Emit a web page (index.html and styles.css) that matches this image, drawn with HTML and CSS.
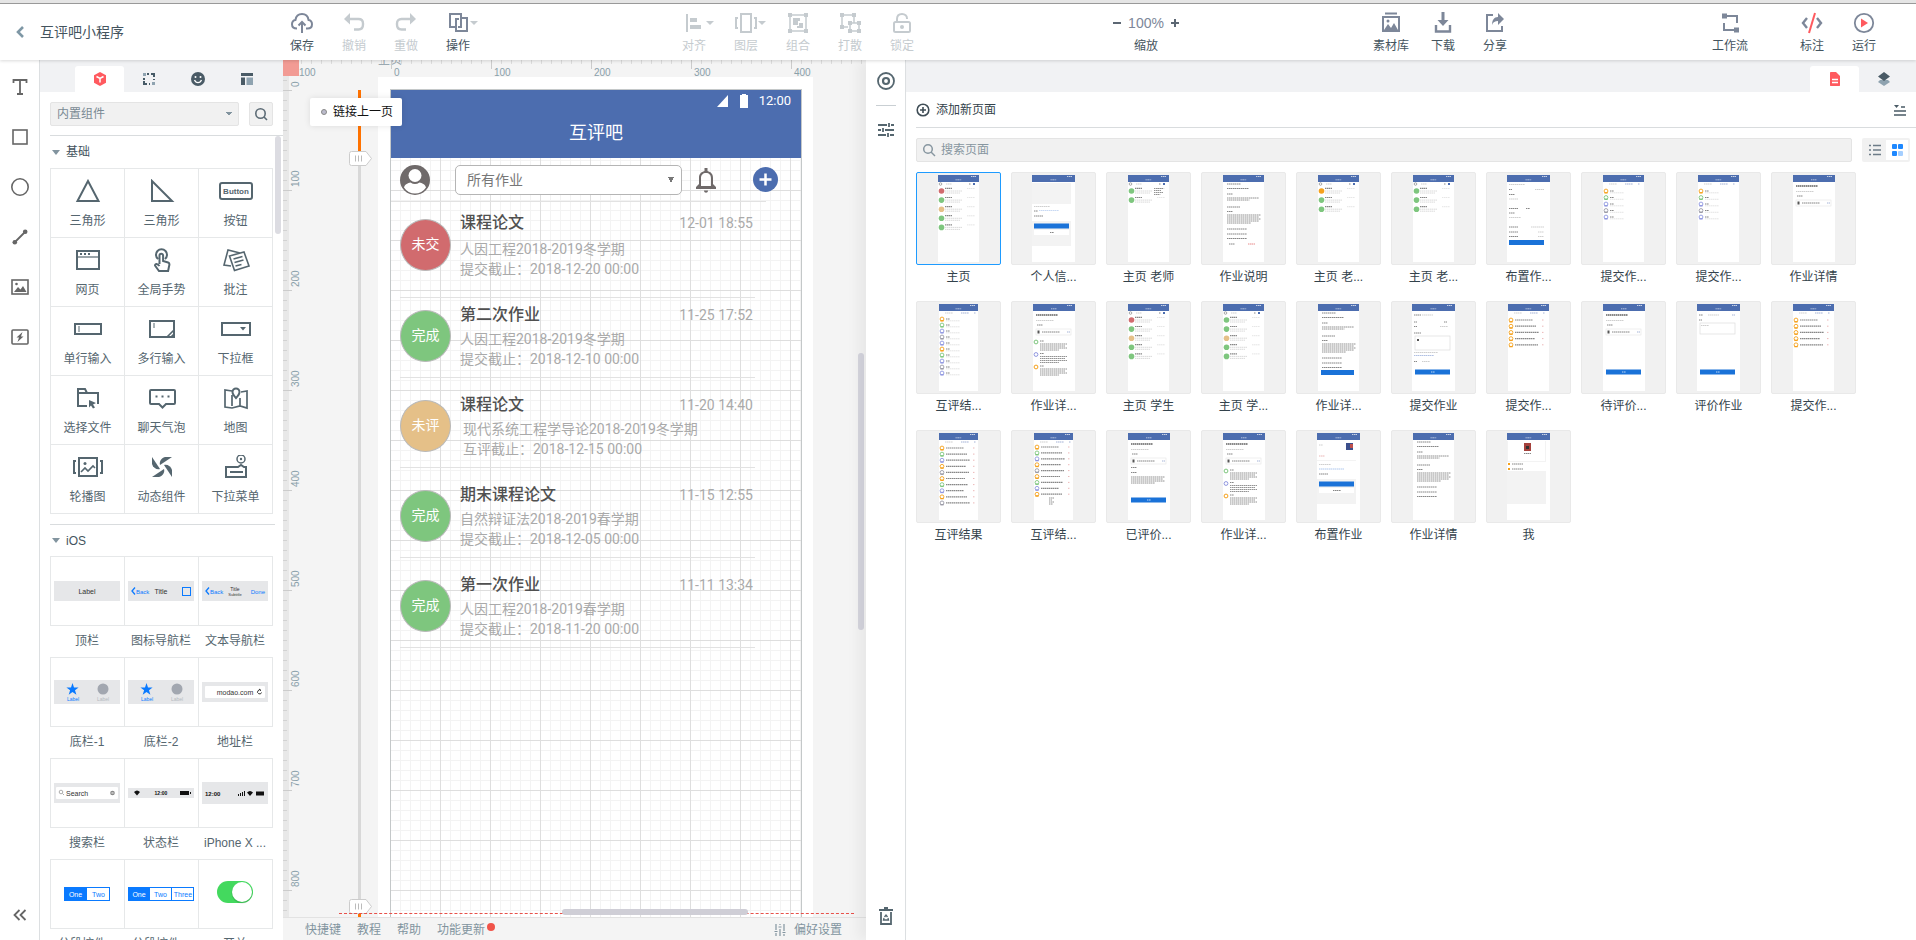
FILE: index.html
```html
<!DOCTYPE html>
<html lang="zh-CN">
<head>
<meta charset="utf-8">
<title>互评吧小程序</title>
<link rel="stylesheet" href="styles.css">
</head>
<body>

<header class="topbar">
 <button class="back" aria-label="返回"><svg width="10" height="14" viewBox="0 0 10 14"><path d="M8 2 3 7l5 5" fill="none" stroke="#7e97a5" stroke-width="2.6"/></svg></button>
 <h1 class="project-name">互评吧小程序</h1>

 <div class="tool-group group-edit">
  <button class="tool"><svg width="24" height="24" viewBox="0 0 24 24" fill="none" stroke="#7d8799" stroke-width="2"><path d="M7 17.500C4 17.500 2 16 2 13.200c0-2.600 1.700-4 3.500-4.300C6 5.300 8.500 3 12 3s6 2.300 6.500 5.900c1.900.3 3.500 1.700 3.500 4.300 0 2.800-2 4.300-4.500 4.300h-1.500"/><path d="M12 22V11M8.500 14.500 12 11l3.500 3.500"/></svg><span>保存</span></button>
  <button class="tool" disabled><svg width="24" height="24" viewBox="0 0 24 24" fill="none" stroke="#c5cbcf" stroke-width="2.400"><path d="M4 8h12.500c3 0 4.500 2 4.500 4.500v1c0 3-1.500 5-4.500 5H12"/><path d="M8 2v11.500L2 8z" fill="#c5cbcf" stroke="none"/></svg><span>撤销</span></button>
  <button class="tool" disabled><svg width="24" height="24" viewBox="0 0 24 24" fill="none" stroke="#c5cbcf" stroke-width="2.400"><path d="M20 8H7.500C4.500 8 3 10 3 12.500v1c0 3 1.500 5 4.500 5H12"/><path d="M16 2v11.500L22 8z" fill="#c5cbcf" stroke="none"/></svg><span>重做</span></button>
  <button class="tool has-caret"><svg width="24" height="24" viewBox="0 0 24 24" fill="none" stroke="#7d8799" stroke-width="2"><path d="M9 16H4V3h11v4M13 8h-3v12h11V7h-6v9h-3"/></svg><span>操作</span></button>
 </div>

 <div class="tool-group group-arrange">
  <button class="tool has-caret" disabled><svg width="24" height="24" viewBox="0 0 24 24" fill="#c5cbcf"><path d="M4 3h2v18H4zM8 7h7v4H8zM8 14h11v4H8z"/></svg><span>对齐</span></button>
  <button class="tool has-caret" disabled><svg width="24" height="24" viewBox="0 0 24 24" fill="none" stroke="#c5cbcf" stroke-width="2"><path d="M7 3h10v18H7zM4 7H2v10h2M20 7h2v10h-2"/></svg><span>图层</span></button>
  <button class="tool" disabled><svg width="24" height="24" viewBox="0 0 24 24" fill="#c5cbcf"><path d="M4 4h16v16H4z" fill="none" stroke="#c5cbcf" stroke-width="1.500"/><path d="M2 2h4v4H2zM18 2h4v4h-4zM2 18h4v4H2zM18 18h4v4h-4zM7 7h7v3h-2v4H7zM13 12h4v5h-6v-2h2z"/></svg><span>组合</span></button>
  <button class="tool" disabled><svg width="24" height="24" viewBox="0 0 24 24" fill="#c5cbcf"><path d="M4 4h12v8M4 4v12h6M12 12h9v8h-9z" fill="none" stroke="#c5cbcf" stroke-width="1.500"/><path d="M2 2h4v4H2zM14 2h4v4h-4zM2 14h4v4H2zM10 10h4v4h-4zM19 10h4v4h-4zM10 18h4v4h-4zM19 18h4v4h-4z"/></svg><span>打散</span></button>
  <button class="tool" disabled><svg width="24" height="24" viewBox="0 0 24 24" fill="none" stroke="#c5cbcf" stroke-width="2"><rect x="4" y="11" width="16" height="10" rx="1.500"/><path d="M7 11V8c0-3 2-5 5-5s5 2 5 4.500V8"/><circle cx="12" cy="16" r="2" fill="#c5cbcf" stroke="none"/></svg><span>锁定</span></button>
 </div>

 <div class="zoom">
  <div class="zoom-row"><button aria-label="缩小"><svg width="10" height="10"><path d="M1 5h8" stroke="#5c6773" stroke-width="2"/></svg></button><output>100%</output><button aria-label="放大"><svg width="10" height="10"><path d="M1 5h8M5 1v8" stroke="#5c6773" stroke-width="2"/></svg></button></div>
  <span>缩放</span>
 </div>

 <div class="tool-group group-file">
  <button class="tool"><svg width="24" height="24" viewBox="0 0 24 24" fill="none" stroke="#7d8799" stroke-width="2"><path d="M6 2.500h12M4 6h16v14H4z"/><path d="M5 19l4-6 3 4 3-5 4 7z" fill="#7d8799" stroke="none"/><circle cx="9" cy="10" r="1.500" fill="#7d8799" stroke="none"/></svg><span>素材库</span></button>
  <button class="tool"><svg width="24" height="24" viewBox="0 0 24 24" fill="none" stroke="#7d8799" stroke-width="2.400"><path d="M5 14v6.500h14V14"/><path d="M10.500 1h3v8h4L12 15 6.500 9h4z" fill="#7d8799" stroke="none"/></svg><span>下载</span></button>
  <button class="tool"><svg width="24" height="24" viewBox="0 0 24 24" fill="none" stroke="#7d8799" stroke-width="2"><path d="M10 4H4v16h15v-5"/><path d="M15 2l6 6-6 6v-4c-3 0-5 1-6 4 0-5 2-8 6-8z" fill="#7d8799" stroke="none"/></svg><span>分享</span></button>
 </div>

 <div class="tool-group group-run">
  <button class="tool flow"><svg width="24" height="24" viewBox="0 0 24 24" fill="none" stroke="#7d8799" stroke-width="2"><path d="M7 5h12v7M6 12v7h12"/><path d="M4 2.500h5v5H4zM16 16.500h5v5h-5z" fill="#7d8799" stroke="none"/></svg><span>工作流</span></button>
  <button class="tool"><svg width="24" height="24" viewBox="0 0 24 24" fill="none" stroke="#7d8799" stroke-width="2.400"><path d="M7 7l-4 5 4 5M17 7l4 5-4 5"/><path d="M15 2 9 22" stroke="#ff5a5f" stroke-width="2"/></svg><span>标注</span></button>
  <button class="tool"><svg width="24" height="24" viewBox="0 0 24 24" fill="none" stroke="#7d8799" stroke-width="1.800"><circle cx="12" cy="12" r="9.200"/><path d="M9 7.500l7 4.500-7 4.500z" fill="#ff5a5f" stroke="none"/></svg><span>运行</span></button>
 </div>
</header>

<main class="workspace">

 <nav class="shapes" aria-label="绘图工具">
  <button aria-label="文字"><svg width="20" height="20" viewBox="0 0 20 20" fill="none" stroke="#666" stroke-width="1.800"><path d="M3.500 6V3h13v3M10 3v14M7 17h6"/></svg></button>
  <button aria-label="矩形"><svg width="20" height="20" viewBox="0 0 20 20" fill="none" stroke="#666" stroke-width="1.600"><rect x="3" y="3" width="14" height="14"/></svg></button>
  <button aria-label="圆形"><svg width="20" height="20" viewBox="0 0 20 20" fill="none" stroke="#666" stroke-width="1.600"><circle cx="10" cy="10" r="8.200"/></svg></button>
  <button aria-label="线条"><svg width="20" height="20" viewBox="0 0 20 20" fill="#666"><path d="M5 15 15 5" stroke="#666" stroke-width="1.800"/><circle cx="4.800" cy="15.200" r="2.300"/><circle cx="15.200" cy="4.800" r="2.300"/></svg></button>
  <button aria-label="图片"><svg width="20" height="20" viewBox="0 0 20 20" fill="#666"><rect x="2" y="3" width="16" height="14" fill="none" stroke="#666" stroke-width="1.600"/><path d="M4 15l4-5 2.500 2.500L13 9l3.500 6z"/><circle cx="6.500" cy="7" r="1.300"/></svg></button>
  <button aria-label="链接区域"><svg width="20" height="20" viewBox="0 0 20 20" fill="#666"><rect x="2" y="3" width="16" height="14" rx="1" fill="none" stroke="#666" stroke-width="1.600"/><path d="M12.500 5 6.500 10.500h2.500L7.500 15 13.500 9.500H11z"/></svg></button>
  <button class="collapse" aria-label="收起"><svg width="14" height="12" viewBox="0 0 14 12" fill="none" stroke="#666" stroke-width="1.800"><path d="M6.500 1 1.500 6l5 5M12.500 1l-5 5 5 5"/></svg></button>
 </nav>

 <aside class="library">
  <div class="tabs">
   <button class="tab active" aria-label="组件"><svg width="16" height="16" viewBox="0 0 16 16"><path d="M8 1l6 3.200v7.600L8 15l-6-3.200V4.200z" fill="#ff5a5f"/><path d="M4.500 5.500 8 7.500l3.500-2M8 7.500v4" stroke="#fff" stroke-width="1.500" fill="none"/></svg></button>
   <button class="tab" aria-label="我的组件"><svg width="16" height="16" viewBox="0 0 16 16" fill="none" stroke="#465a66" stroke-width="2"><path d="M6 3h2M10 3h3v3M3 7v2M3 10v3h3M8 13h1M13 8v1"/><path d="M2 2h3v3H2zM11 11h3v3h-3z" fill="#8fa3b0" stroke="none"/></svg></button>
   <button class="tab" aria-label="图标"><svg width="16" height="16" viewBox="0 0 16 16"><circle cx="8" cy="8" r="7" fill="#4a5b66"/><circle cx="5.500" cy="6" r="1" fill="#fff"/><circle cx="10.500" cy="6" r="1" fill="#fff"/><path d="M4.500 9c1.500 3.500 5.500 3.500 7 0" stroke="#fff" fill="none" stroke-width="1.300"/></svg></button>
   <button class="tab" aria-label="模板"><svg width="16" height="16" viewBox="0 0 16 16"><path d="M2 2h12v3H2zM2 6.500h4V14H2z" fill="#4a5b66"/><path d="M7.500 6.500H14V14H7.500z" fill="#8fa3b0"/></svg></button>
  </div>
  <div class="library-filter">
   <select aria-label="组件库"><option>内置组件</option></select>
   <button aria-label="搜索组件"><svg width="14" height="14" viewBox="0 0 14 14" fill="none" stroke="#5c6b75" stroke-width="1.600"><circle cx="6.500" cy="6.500" r="4.700"/><path d="M10 10l3 3"/></svg></button>
  </div>

  <div class="library-list">
   <h2 class="section-title">基础</h2>
   <div class="basic-grid">
    <button><svg width="32" height="24" viewBox="0 0 32 24"><path d="M16 2 5.500 22h21z"/></svg>三角形</button>
    <button><svg width="32" height="24" viewBox="0 0 32 24"><path d="M6 2v20h20z"/></svg>三角形</button>
    <button><svg width="36" height="24" viewBox="0 0 36 24"><rect x="2" y="4" width="32" height="16" rx="2"/><text class="icon-text" x="18" y="15">Button</text></svg>按钮</button>
    <button><svg width="32" height="24" viewBox="0 0 32 24"><path d="M5 3h22v18H5z"/><path d="M5 9h22" stroke-width="1.200"/><path d="M8 6h2M12 6h2M16 6h2"/></svg>网页</button>
    <button><svg width="32" height="24" viewBox="0 0 32 24"><path d="M12 11a5.500 5.500 0 1 1 7 0M13.500 16V7.500a1.800 1.800 0 0 1 3.600 0V13l5 1.500c1.500.5 1.500 2 1 3.500l-1 5H13l-4-5.500c0-2 2.500-2 4.500.5"/></svg>全局手势</button>
    <button><svg width="32" height="24" viewBox="0 0 32 24"><path d="M11 18l-7-1L8 2l12 3M9.500 8 24 4l5 14-14.500 4.500zM13.500 11l9-2.500M14.500 14.500l9-2.500M15.500 18l6-1.500" stroke-width="1.600"/></svg>批注</button>
    <button><svg width="32" height="24" viewBox="0 0 32 24"><path d="M3 7h26v10H3z"/><path d="M7 9v6" stroke-width="1"/></svg>单行输入</button>
    <button><svg width="32" height="24" viewBox="0 0 32 24"><path d="M4 4h24v16H4z"/><path d="M8 6v5" stroke-width="1"/><path d="M21 20l7-7M25 20l3-3" stroke-width="1.600"/></svg>多行输入</button>
    <button><svg width="32" height="24" viewBox="0 0 32 24"><path d="M2 6h28v12H2z"/><path d="M20 10h6l-3 3.500z" fill="#55666f" stroke="none"/></svg>下拉框</button>
    <button><svg width="32" height="24" viewBox="0 0 32 24"><path d="M15 20H6V3h7l2 4h11v11M6 7h9"/><path d="M17 14l7 3-3 1.500 2 3-2 1-2-3-2 2z" fill="#55666f" stroke="none"/></svg>选择文件</button>
    <button><svg width="32" height="24" viewBox="0 0 32 24"><path d="M5 4h23c1 0 1 0 1 1v12c0 1 0 1-1 1h-8l-3.500 3.500L13 18H5c-1 0-1 0-1-1V5c0-1 0-1 1-1z"/><path d="M9.500 10.500h2M15.500 10.500h2M21.500 10.500h2"/></svg>聊天气泡</button>
    <button><svg width="32" height="24" viewBox="0 0 32 24"><path d="M12 5 5 4v17l7 1 8-2 7 2V5l-6 1M12 9v11M20 12v8" stroke-width="1.700"/><path d="M16 12c-3-3-3.500-4.500-3.500-6a3.500 3.500 0 0 1 7 0c0 1.500-.5 3-3.500 6z"/></svg>地图</button>
    <button><svg width="32" height="24" viewBox="0 0 32 24"><path d="M7 3h18v18H7zM4 6H2v12h2M28 6h2v12h-2"/><path d="M9 17l4-4 3 3 5-5 2 2" stroke-width="1.600"/><circle cx="13" cy="8.500" r="1.500" fill="#55666f" stroke="none"/></svg>轮播图</button>
    <button><svg width="32" height="24" viewBox="0 0 32 24"><g id="blades"><path class="solid" d="M26 2H19c-4 1-6 5-5 8z"/><path class="solid" d="M26 2H19c-4 1-6 5-5 8z" transform="rotate(90 16 12)"/><path class="solid" d="M26 2H19c-4 1-6 5-5 8z" transform="rotate(180 16 12)"/><path class="solid" d="M26 2H19c-4 1-6 5-5 8z" transform="rotate(270 16 12)"/></g></svg>动态组件</button>
    <button><svg width="32" height="24" viewBox="0 0 32 24"><path d="M6 12h12l3-2 3 2h2v10H6zM10 17h13"/><circle cx="21" cy="4" r="4" stroke-width="1.500"/><circle cx="21" cy="4" r="1.200" fill="#55666f" stroke="none"/></svg>下拉菜单</button>
   </div>

   <h2 class="section-title section-ios">iOS</h2>
   <div class="ios-grid">
    <button><span class="preview"><svg width="66" height="20"><rect width="66" height="20" fill="#e6e7e9"/><text x="33" y="13" text-anchor="middle">Label</text></svg></span>顶栏</button>
    <button><span class="preview"><svg width="66" height="20"><rect width="66" height="20" fill="#e6e7e9"/><path d="M7 6.500 4 10l3 3.500" fill="none" stroke="#0a7aff" stroke-width="1.300"/><text class="small blue" x="8" y="13">Back</text><text x="33" y="13" text-anchor="middle">Title</text><rect x="54.500" y="6.500" width="8" height="8" fill="none" stroke="#0a7aff"/></svg></span>图标导航栏</button>
    <button><span class="preview"><svg width="66" height="20"><rect width="66" height="20" fill="#e6e7e9"/><path d="M7 6.500 4 10l3 3.500" fill="none" stroke="#0a7aff" stroke-width="1.300"/><text class="small blue" x="8" y="13">Back</text><text class="tiny" x="33" y="10" text-anchor="middle">Title</text><text class="mini" x="33" y="15" text-anchor="middle">Subtitle</text><text class="small blue" x="63" y="13" text-anchor="end">Done</text></svg></span>文本导航栏</button>
    <button><span class="preview"><svg width="66" height="24"><rect width="66" height="24" fill="#e6e7e9"/><path d="M18.500 3l1.500 4.400h4.600L21 10.200l1.400 4.500-3.900-2.800-3.800 2.800 1.400-4.500-3.700-2.800H17z" fill="#0a7aff"/><circle cx="49" cy="9" r="5.500" fill="#a2a7b0"/><text class="tiny blue" x="19" y="21" text-anchor="middle">Label</text><text class="tiny pale" x="49" y="21" text-anchor="middle">Label</text></svg></span>底栏-1</button>
    <button><span class="preview"><svg width="66" height="24"><rect width="66" height="24" fill="#e6e7e9"/><path d="M18.500 3l1.500 4.400h4.600L21 10.200l1.400 4.500-3.900-2.800-3.800 2.800 1.400-4.500-3.700-2.800H17z" fill="#0a7aff"/><circle cx="49" cy="9" r="5.500" fill="#a2a7b0"/><text class="tiny blue" x="19" y="21" text-anchor="middle">Label</text><text class="tiny pale" x="49" y="21" text-anchor="middle">Label</text></svg></span>底栏-2</button>
    <button><span class="preview"><svg width="66" height="20"><rect width="66" height="20" fill="#e6e7e9"/><rect x="3" y="4" width="60" height="12" rx="1" fill="#fff"/><text x="33" y="13" text-anchor="middle">modao.com</text><path d="M59 8.500a2 2 0 1 0 .5 2M57 7l2 1.500" fill="none" stroke="#333"/></svg></span>地址栏</button>
    <button><span class="preview"><svg width="66" height="20"><rect width="66" height="20" fill="#e6e7e9"/><rect x="2" y="4" width="62" height="12" rx="1" fill="#fff"/><circle cx="7" cy="9" r="1.800" fill="none" stroke="#999" stroke-width=".8"/><path d="M8.500 10.500 10 12" stroke="#999" stroke-width=".8"/><text x="12" y="12.500">Search</text><circle cx="58.500" cy="10" r="2.300" fill="#888"/><path d="M57.600 9.100l1.800 1.800M59.400 9.100l-1.800 1.800" stroke="#fff" stroke-width=".6"/></svg></span>搜索栏</button>
    <button><span class="preview"><svg width="66" height="10"><rect width="66" height="10" fill="#e6e7e9"/><path d="M6 4c2-2 4-2 6 0L9 7.500z" fill="#111"/><text class="tiny bold" x="33" y="7" text-anchor="middle">12:00</text><path d="M52 3h9v4h-9z" fill="#111"/><path d="M62 4h1v2h-1z" fill="#111"/></svg></span>状态栏</button>
    <button><span class="preview"><svg width="66" height="22"><rect width="66" height="22" fill="#e6e7e9"/><text class="bold small" x="3" y="14">12:00</text><path d="M36 12h1v2h-1zM38 11h1v3h-1zM40 10h1v4h-1zM42 9h1v5h-1zM45 10.500c2-2 4-2 6 0L48 14zM54 9.500h8v4h-8z" fill="#111"/></svg></span>iPhone X ...</button>
    <button><span class="preview"><svg width="46" height="14"><rect x=".5" y=".5" width="45" height="13" fill="#fff" stroke="#0a7aff"/><rect width="23" height="14" fill="#0a7aff"/><text class="white" x="11.500" y="9.500" text-anchor="middle">One</text><text class="blue" x="34.500" y="9.500" text-anchor="middle">Two</text></svg></span>分段控件...</button>
    <button><span class="preview"><svg width="66" height="14"><rect x=".5" y=".5" width="65" height="13" fill="#fff" stroke="#0a7aff"/><rect width="22" height="14" fill="#0a7aff"/><path d="M43.500 0v14" stroke="#0a7aff"/><text class="white" x="11" y="9.500" text-anchor="middle">One</text><text class="blue" x="32.500" y="9.500" text-anchor="middle">Two</text><text class="blue" x="55" y="9.500" text-anchor="middle">Three</text></svg></span>分段控件...</button>
    <button><span class="preview"><svg width="40" height="28"><rect x="2" y="1" width="36" height="22" rx="11" fill="#43d95e"/><circle cx="27" cy="13" r="10.500" fill="#000" opacity=".12"/><circle cx="27" cy="12" r="10" fill="#fff"/></svg></span>开关</button>
   </div>
  </div>
 </aside>

 <section class="editor">
  <div class="stage">
   <div class="artboard">
    <div class="phone">
     <div class="phone-status">
      <svg width="12" height="12"><path d="M11 0v12H0z" fill="#fff"/></svg>
      <svg width="10" height="14"><path d="M3 0h4v1h2v13H1V1h2z" fill="#fff"/></svg>
      <span>12:00</span>
     </div>
     <div class="phone-title">互评吧</div>
     <div class="phone-filter">
      <svg width="30" height="30" viewBox="0 0 30 30"><circle cx="15" cy="15" r="15" fill="#6f6a6a"/><circle cx="15" cy="10.500" r="6.500" fill="#fff"/><path d="M4 22.500C5 19 8 18 10.500 17.500c3 2 6 2 9 0C22 18 25 19 26 22.500a13 13 0 0 1-22 0z" fill="#fff"/></svg>
      <select aria-label="作业筛选"><option>所有作业</option></select>
      <svg width="22" height="26" viewBox="0 0 22 26" fill="#6f6a6a"><path d="M1 22v-2l3-3v-6c0-4 2-6 5.500-7V1h3v3C16 5 18 7 18 11v6l3 3v2zM6 19h10v-8c0-3-2-5-5-5s-5 2-5 5zM9 23.500h4c0 3-4 3-4 0z"/></svg>
      <svg width="25" height="25" viewBox="0 0 25 25"><circle cx="12.500" cy="12.500" r="12.500" fill="#4c6daf"/><path d="M12.500 6.500v12M6.500 12.500h12" stroke="#fff" stroke-width="2.500"/></svg>
     </div>
     <ul class="homework">
      <li class="first"><span class="badge red">未交</span><div class="info"><h3>课程论文<time>12-01 18:55</time></h3><p>人因工程2018-2019冬学期</p><p>提交截止：2018-12-20 00:00</p></div></li>
      <li class="second"><span class="badge green">完成</span><div class="info"><h3>第二次作业<time>11-25 17:52</time></h3><p>人因工程2018-2019冬学期</p><p>提交截止：2018-12-10 00:00</p></div></li>
      <li class="review"><span class="badge amber">未评</span><div class="info"><h3>课程论文<time>11-20 14:40</time></h3><p>现代系统工程学导论2018-2019冬学期</p><p>互评截止：2018-12-15 00:00</p></div></li>
      <li><span class="badge green">完成</span><div class="info"><h3>期末课程论文<time>11-15 12:55</time></h3><p>自然辩证法2018-2019春学期</p><p>提交截止：2018-12-05 00:00</p></div></li>
      <li><span class="badge green">完成</span><div class="info"><h3>第一次作业<time>11-11 13:34</time></h3><p>人因工程2018-2019春学期</p><p>提交截止：2018-11-20 00:00</p></div></li>
     </ul>
    </div>
   </div>

   <!-- rulers, page length slider and scrollbars float over the canvas -->
   <div class="page-caption">主页</div>
   <div class="ruler-x"><span>100</span><span>0</span><span>100</span><span>200</span><span>300</span><span>400</span></div>
   <div class="ruler-y"><span>0</span><span>100</span><span>200</span><span>300</span><span>400</span><span>500</span><span>600</span><span>700</span><span>800</span></div>
   <div class="ruler-corner"></div>
   <div class="length-track"></div>
   <svg class="handle handle-top" width="24" height="15" viewBox="0 0 24 15"><path d="M2.500.5H17l5.500 7-5.500 7H2.500a2 2 0 0 1-2-2v-10a2 2 0 0 1 2-2z" fill="#fff" stroke="#ccc"/><path d="M6.500 4.500v6M9.500 4.500v6M12.500 4.500v6" stroke="#bbb"/></svg>
   <svg class="handle handle-bottom" width="24" height="15" viewBox="0 0 24 15"><path d="M2.500.5H17l5.500 7-5.500 7H2.500a2 2 0 0 1-2-2v-10a2 2 0 0 1 2-2z" fill="#fff" stroke="#ccc"/><path d="M6.500 4.500v6M9.500 4.500v6M12.500 4.500v6" stroke="#bbb"/></svg>
   <div class="fold-line"></div>
   <div class="link-tip"><i></i>链接上一页</div>
   <div class="scroll-y"></div>
   <div class="scroll-x"></div>
  </div>
  <footer class="editor-footer">
   <a href="#">快捷键</a><a href="#">教程</a><a href="#">帮助</a><a href="#" class="has-news">功能更新</a>
   <a href="#" class="prefs"><svg width="12" height="14" viewBox="0 0 12 14" fill="none" stroke="#82949f" stroke-width="1.200"><path d="M2 1v6M2 10v3M6 1v1M6 6v7M10 1v7M10 11v2M.5 8.500h3M4.500 4h3M8.500 9.500h3"/></svg>偏好设置</a>
  </footer>
 </section>

 <nav class="side-strip" aria-label="属性">
  <button aria-label="页面状态"><svg width="20" height="20" viewBox="0 0 20 20" fill="none" stroke="#55666f"><circle cx="10" cy="10" r="8" stroke-width="1.800"/><circle cx="10" cy="10" r="3" stroke-width="2.200"/></svg></button>
  <button class="adjust" aria-label="外观"><svg width="20" height="20" viewBox="0 0 20 20" fill="none" stroke="#55666f" stroke-width="1.800"><path d="M2 5h9M15 5h3M2 10h3M9 10h9M2 15h8M14 15h4M13 3v4M7 8v4M12 13v4"/></svg></button>
  <button class="trash" aria-label="回收站"><svg width="20" height="20" viewBox="0 0 20 20" fill="none" stroke="#55666f" stroke-width="1.800"><path d="M3 4h14M8 2h4M5 6v12h10V6"/><path d="M8.500 11l1.500-2 1.500 2M8 12l-.5 2h5L12 12" stroke-width="1.300"/></svg></button>
 </nav>

 <aside class="pages">
  <div class="tabs tabs-right">
   <button class="tab active" aria-label="页面"><svg width="16" height="16" viewBox="0 0 16 16"><path d="M4 1h5l4 4v9c0 1-.5 1-1 1H4c-1 0-1-.5-1-1V2c0-1 .5-1 1-1z" fill="#ff5a5f"/><path d="M5 8.500h6M5 11.500h6" stroke="#fff" stroke-width="1.300"/></svg></button>
   <button class="tab" aria-label="图层"><svg width="16" height="16" viewBox="0 0 16 16"><path d="M8 15 2 11l2-2h8l2 2z" fill="#8fa3b0"/><path d="M8 1l6 4.500L8 10 2 5.500z" fill="#4a5b66"/></svg></button>
  </div>
  <div class="pages-head">
   <button class="add-page"><svg width="14" height="14" viewBox="0 0 14 14" fill="none" stroke="#3f4d56" stroke-width="1.600"><circle cx="7" cy="7" r="5.800"/><path d="M4 7h6M7 4v6"/></svg>添加新页面</button>
   <button aria-label="折叠全部"><svg width="14" height="14" viewBox="0 0 14 14"><path d="M1 2h5L3.500 5z" fill="#4a5b66"/><path d="M8 4h4M1 8h12M1 12h12" stroke="#4a5b66" stroke-width="1.500"/></svg></button>
  </div>
  <div class="pages-search">
   <label class="search-box"><svg width="14" height="14" viewBox="0 0 14 14" fill="none" stroke="#8796a0" stroke-width="1.500"><circle cx="6" cy="6" r="4.300"/><path d="M9 9l4 4"/></svg><input type="text" placeholder="搜索页面" aria-label="搜索页面"></label>
   <div class="view-switch">
    <button aria-label="列表"><svg width="12" height="12"><path d="M0 1.500h2M4 1.500h8M0 6h2M4 6h8M0 10.500h2M4 10.500h8" stroke="#6d7c88" stroke-width="1.500"/></svg></button>
    <button class="on" aria-label="缩略图"><svg width="12" height="12" fill="#1e88ff"><rect x="1" width="5" height="5" rx="1"/><rect x="7" width="5" height="5" rx="1"/><rect x="1" y="7" width="5" height="5" rx="1"/><rect x="7" y="7" width="5" height="5" rx="1" opacity=".4"/></svg></button>
   </div>
  </div>
  <div class="page-grid" id="pageGrid"></div>
 </aside>
</main>

<script src="pages.js"></script>
</body>
</html>
```
FILE: styles.css
```css
* { box-sizing: border-box; }
body {
 margin: 0;
 height: 100vh;
 display: flex;
 flex-direction: column;
 overflow: hidden;
 border-top: 3px solid #e5e5e5;
 font: 12px/16px "Liberation Sans", "Noto Sans CJK SC", sans-serif;
 color: #44545e;
 background: #fff;
}
button {
 font: inherit;
 color: inherit;
 border: 0;
 padding: 0;
 background: none;
}
h1, h2, h3, p, ul { margin: 0; padding: 0; font-weight: normal; }
svg { display: block; flex: none; }
a { color: inherit; text-decoration: none; }

/* top bar */
.topbar {
 position: relative;
 z-index: 5;
 height: 57px;
 flex: none;
 display: flex;
 align-items: center;
 border-top: 1px solid #999;
 background: #fff;
 box-shadow: 0 1px 3px rgba(0, 0, 0, .15);
}
.back { padding: 0 15px; }
.project-name {
 width: 236px;
 font-size: 14px;
 line-height: 20px;
}
.tool-group { display: flex; }
.tool {
 position: relative;
 width: 52px;
 display: flex;
 flex-direction: column;
 align-items: center;
 gap: 3px;
}
.tool:disabled { color: #c5cbcf; }
.has-caret::after {
 content: "";
 position: absolute;
 right: 6px;
 top: 10px;
 border: 4px solid transparent;
 border-top-color: #c5cbcf;
 border-bottom: 0;
}
.group-arrange { margin-left: 184px; }
.zoom {
 width: 96px;
 margin-left: 170px;
 display: flex;
 flex-direction: column;
 align-items: center;
 gap: 5px;
 padding-top: 2px;
}
.zoom-row { display: flex; align-items: center; gap: 6px; height: 20px; font-size: 14px; color: #7d8799; }
.group-file { margin-left: 171px; }
.group-run { margin-left: auto; padding-right: 26px; }
.flow { margin-right: 30px; }

.workspace { flex: 1; display: flex; min-height: 0; }

/* drawing tools */
.shapes {
 width: 40px;
 flex: none;
 display: flex;
 flex-direction: column;
 align-items: center;
 gap: 30px;
 padding: 17px 0 19px;
 border-right: 1px solid #dcdfe1;
}
.collapse { margin-top: auto; }

/* component library */
.library {
 width: 243px;
 flex: none;
 display: flex;
 flex-direction: column;
}
.tabs {
 height: 32px;
 flex: none;
 display: flex;
 align-items: flex-end;
 padding-left: 35px;
 background: #f1f2f4;
}
.tab {
 width: 49px;
 height: 26px;
 display: flex;
 align-items: center;
 justify-content: center;
}
.tab.active { background: #fff; border-radius: 3px 3px 0 0; }
.library-filter {
 display: flex;
 gap: 10px;
 margin-left: 10px;
 padding: 10px 0 9px;
 border-bottom: 1px solid #d9dcde;
}
.library-filter select {
 width: 189px;
 height: 24px;
 padding: 0 6px;
 appearance: none;
 font: inherit;
 color: #7a8a94;
 border: 1px solid #e4e4e4;
 border-radius: 2px;
 background:
  linear-gradient(to top right, transparent 50%, #82949f 50%) no-repeat right 9px center / 3px 4px,
  linear-gradient(to top left, transparent 50%, #82949f 50%) no-repeat right 6px center / 3px 4px,
  #f1f1f1;
}
.library-filter button {
 width: 24px;
 height: 24px;
 display: flex;
 align-items: center;
 justify-content: center;
 border: 1px solid #e4e4e4;
 border-radius: 2px;
 background: #f1f1f1;
}
.library-list {
 position: relative;
 flex: 1;
 min-height: 0;
 overflow: hidden;
 padding: 0 8px 0 10px;
}
.library-list::after {
 content: "";
 position: absolute;
 right: 2px;
 top: 0;
 width: 6px;
 height: 98px;
 border-radius: 3px;
 background: #dcdce2;
}
.section-title {
 display: flex;
 align-items: center;
 gap: 6px;
 height: 32px;
 padding-left: 2px;
 font-size: 12px;
}
.section-title::before {
 content: "";
 border: 4px solid transparent;
 border-top: 5px solid #82949f;
 border-bottom: 0;
}
.section-ios { margin-top: 10px; border-top: 1px solid #d9dcde; }
.basic-grid, .ios-grid {
 display: grid;
 grid-template-columns: repeat(3, 74px);
 width: 223px;
}
.basic-grid { border: solid #e6e8e9; border-width: 1px 0 0 1px; }
.basic-grid button {
 height: 69px;
 display: flex;
 flex-direction: column;
 align-items: center;
 gap: 10px;
 padding-top: 10px;
 border: solid #e6e8e9;
 border-width: 0 1px 1px 0;
 color: #55666f;
}
.basic-grid svg { fill: none; stroke: #55666f; stroke-width: 2; }
.basic-grid .solid { fill: #55666f; stroke: none; }
.basic-grid .icon-text { font: bold 8px "Liberation Sans", sans-serif; text-anchor: middle; fill: #55666f; stroke: none; }
.ios-grid button {
 height: 101px;
 display: flex;
 flex-direction: column;
 align-items: center;
 gap: 7px;
 color: #55666f;
}
.preview {
 width: 75px;
 height: 70px;
 flex: none;
 display: flex;
 align-items: center;
 justify-content: center;
 border: 1px solid #e6e8e9;
}
.preview text { font: 7px "Liberation Sans", sans-serif; fill: #333; }
.preview .small { font-size: 6px; }
.preview .tiny { font-size: 5px; }
.preview .mini { font-size: 4px; }
.preview .blue { fill: #0a7aff; }
.preview .pale { fill: #b5b9c0; }
.preview .white { fill: #fff; }
.preview .bold { font-weight: bold; fill: #111; }

/* canvas */
.editor {
 flex: 583 1 0;
 min-width: 0;
 display: flex;
 flex-direction: column;
 background: #f4f4f4;
}
.stage {
 position: relative;
 flex: 1;
 min-height: 0;
 overflow: hidden;
}
.artboard {
 height: 100%;
 width: 435px;
 margin-left: 95px;
 padding: 29px 11px 0 12px;
 background: linear-gradient(#f4f4f4 17px, #fff 17px);
}
.phone {
 height: 100%;
 border: solid #c4c8c9;
 border-width: 1px 1px 0;
 font-family: Roboto, "Noto Sans CJK SC", sans-serif;
 background:
  linear-gradient(90deg, #dedede 1px, transparent 1px) 49px 0 / 50px 50px,
  linear-gradient(#dedede 1px, transparent 1px) 0 0 / 50px 50px,
  linear-gradient(90deg, #f3f3f3 1px, transparent 1px) 9px 0 / 10px 10px,
  linear-gradient(#f3f3f3 1px, #fff 1px) 0 0 / 10px 10px;
}
.phone-status {
 height: 22px;
 display: flex;
 align-items: center;
 justify-content: flex-end;
 gap: 10px;
 padding-right: 10px;
 font-size: 13px;
 color: #fff;
 background: #4c6daf;
}
.phone-title {
 height: 46px;
 line-height: 42px;
 text-align: center;
 font-size: 18px;
 color: #fff;
 background: #4c6daf;
}
.phone-filter {
 display: flex;
 align-items: center;
 height: 44px;
 padding-left: 9px;
 border-bottom: 1px solid #e2e2e2;
 margin-right: 35px;
}
.phone-filter select {
 flex: 1;
 height: 30px;
 margin: 0 13px 0 25px;
 padding: 0 11px;
 appearance: none;
 font: 14px/20px Roboto, "Noto Sans CJK SC", sans-serif;
 color: #777;
 border: 1px solid #b5b5b5;
 border-radius: 5px;
 background:
  linear-gradient(to top right, transparent 50%, #777 50%) no-repeat right 10px center / 3px 6px,
  linear-gradient(to top left, transparent 50%, #777 50%) no-repeat right 7px center / 3px 6px,
  #fff;
}
.phone-filter svg:last-child { margin-left: 36px; margin-right: -12px; }
.homework {
 list-style: none;
 width: 355px;
 margin-left: 9px;
}
.homework li {
 display: flex;
 align-items: center;
 gap: 9px;
 padding: 15px 0 8px;
 border-bottom: 1px solid #e2e2e2;
}
.homework .first { padding: 9px 0 18px; }
.homework .second { padding: 5px 0 8px; }
.badge {
 width: 51px;
 height: 52px;
 flex: none;
 line-height: 49px;
 text-align: center;
 font-size: 14px;
 color: #fff;
 border: 1px solid #b9b9b9;
 border-radius: 50%;
}
.red { background: #d16b6e; }
.green { background: #7ec67e; }
.amber { background: #e5c088; }
.info { flex: 1; }
.info h3 {
 display: flex;
 justify-content: space-between;
 align-items: center;
 padding-right: 2px;
 margin-bottom: 2px;
 font-size: 16px;
 font-weight: 500;
 line-height: 24px;
 color: #505050;
}
.first h3 { margin-bottom: 4px; }
.info time { font-size: 14px; font-weight: normal; color: #aaa; }
.info p { font-size: 14px; line-height: 20px; color: #aaa; white-space: nowrap; }
.review p { padding-left: 3px; }

.page-caption {
 position: absolute;
 left: 95px;
 top: -8px;
 color: #9aa8b0;
}
.ruler-x {
 position: absolute;
 top: 0;
 left: 8px;
 right: 0;
 height: 20px;
 display: flex;
 padding-top: 5px;
 font-size: 10px;
 color: #8aa0aa;
 background:
  linear-gradient(90deg, #ccc 1px, transparent 1px) repeat-x 0 0 / 100px 9px,
  linear-gradient(90deg, #ddd 1px, transparent 1px) repeat-x 0 0 / 10px 4px;
}
.ruler-x span { width: 100px; flex: none; padding-left: 3px; }
.ruler-x span:first-child { padding-left: 8px; }
.ruler-y {
 position: absolute;
 top: 0;
 left: 0;
 bottom: 0;
 width: 20px;
 display: flex;
 flex-direction: column;
 overflow: hidden;
 font-size: 10px;
 color: #8aa0aa;
 background:
  linear-gradient(#ccc 1px, transparent 1px) repeat-y 0 30px / 9px 100px,
  linear-gradient(#d2d2d2 1px, transparent 1px) repeat-y 0 0 / 4px 10px,
  linear-gradient(90deg, #e8e8e8 6px, transparent 6px);
}
.ruler-y span {
 height: 100px;
 flex: none;
 padding: 3px 6px 0 0;
 writing-mode: vertical-rl;
 transform: rotate(180deg);
 line-height: 14px;
}
.ruler-y span:first-child { height: 30px; }
.ruler-corner {
 position: absolute;
 left: 0;
 top: 0;
 width: 16px;
 height: 16px;
 background: #f29b94;
}
.length-track {
 position: absolute;
 left: 75px;
 top: 30px;
 bottom: 0;
 width: 3px;
 background: linear-gradient(#ff7200 62px, #d8d8d8 62px, #d8d8d8 calc(100% - 4px), #ff7200 calc(100% - 4px));
}
.handle { position: absolute; left: 66px; }
.handle-top { top: 91px; }
.handle-bottom { bottom: 3px; }
.fold-line {
 position: absolute;
 left: 56px;
 right: 12px;
 bottom: 3px;
 border-top: 1px dashed #e8504a;
}
.link-tip {
 position: absolute;
 left: 27px;
 top: 38px;
 display: flex;
 align-items: center;
 gap: 6px;
 height: 28px;
 padding: 0 9px 0 11px;
 color: #111;
 background: #fff;
 border-radius: 2px;
 box-shadow: 0 0 6px rgba(0, 0, 0, .1);
}
.link-tip i { width: 6px; height: 6px; border: 1px solid #888; border-radius: 50%; background: #bbc; }
.scroll-y {
 position: absolute;
 right: 2px;
 top: 293px;
 width: 6px;
 height: 277px;
 border-radius: 3px;
 background: #d5d5de;
}
.scroll-x {
 position: absolute;
 left: 279px;
 bottom: 2px;
 width: 186px;
 height: 6px;
 border-radius: 3px;
 background: #cfced6;
}
.editor-footer {
 height: 23px;
 flex: none;
 display: flex;
 align-items: center;
 gap: 16px;
 padding: 2px 24px 0 22px;
 border-top: 1px solid #e2e2e2;
 color: #82949f;
}
.has-news { position: relative; }
.has-news::after {
 content: "";
 position: absolute;
 right: -10px;
 top: 1px;
 width: 8px;
 height: 8px;
 border-radius: 50%;
 background: #f0544a;
}
.prefs { margin-left: auto; display: flex; align-items: center; gap: 8px; }

/* strip between canvas and pages */
.side-strip {
 width: 40px;
 flex: none;
 display: flex;
 flex-direction: column;
 align-items: center;
 padding: 11px 0 14px;
 border-right: 1px solid #dcdfe1;
 box-shadow: -8px 0 12px rgba(0, 0, 0, .05);
 z-index: 2;
 background: #fff;
}
.adjust { margin-top: 14px; padding-top: 14px; border-top: 1px solid #c9cfd3; }
.trash { margin-top: auto; }

/* page list */
.pages { flex: 1010 1 0; min-width: 0; }
.tabs-right { justify-content: flex-end; padding: 0 8px 0 0; }
.pages-head {
 display: flex;
 justify-content: space-between;
 align-items: center;
 height: 36px;
 margin-left: 10px;
 padding-right: 9px;
 border-bottom: 1px solid #d9dcde;
}
.add-page { display: flex; align-items: center; gap: 6px; color: #33424b; }
.pages-search { display: flex; gap: 10px; padding: 10px 6px 10px 10px; }
.search-box {
 flex: 1;
 display: flex;
 align-items: center;
 gap: 5px;
 height: 24px;
 padding-left: 5px;
 border: 1px solid #e4e4e4;
 border-radius: 2px;
 background: #f1f1f1;
}
.search-box input { flex: 1; border: 0; padding: 0; background: none; outline: 0; font: inherit; }
.search-box input::placeholder { color: #8796a0; }
.view-switch { display: flex; height: 24px; padding: 2px; border-radius: 2px; background: #f1f1f1; }
.view-switch button { width: 22px; display: flex; align-items: center; justify-content: center; }
.view-switch .on { background: #fff; }
.page-grid {
 display: grid;
 grid-template-columns: repeat(auto-fill, 85px);
 gap: 10px;
 padding-left: 10px;
}
.page-card { height: 119px; display: flex; flex-direction: column; align-items: center; gap: 4px; color: #33424b; }
.thumb {
 width: 85px;
 height: 93px;
 display: flex;
 justify-content: center;
 align-items: center;
 border: 1px solid #e9e9e9;
 border-radius: 2px;
 background: #f1f1f1;
}
.page-card.current .thumb { border-color: #1e9bff; }
```
FILE: pages.js
```js
const C = { r: '#d16b6e', g: '#7ec67e', a: '#e5c088', o: '#f5a11c', b: '#8f96e0', s: '#9a9aa6', k: '#555', l: '#bbb' };

// small drawing helpers, all return svg strings
function bar(x, y, w, h, fill) {
 return `<rect x="${x}" y="${y}" width="${w}" height="${h}" fill="${fill}"/>`;
}
function line(x, y, w, color, weight = 1) {
 return `<path d="M${x} ${y}h${w}" stroke="${color}" stroke-width="${weight}" stroke-dasharray="1.300 .5 1.800 .4" opacity=".7"/>`;
}
function para(x, y, w, rows) {
 let s = '';
 for (let i = 0; i < rows; i++) s += line(x, y + i * 2, i === rows - 1 ? w * 0.7 : w - i % 2 * 2, C.k, 0.9);
 return s;
}
function frame(w, body) {
 return `<svg width="${w}" height="87" viewBox="0 0 ${w} 87"><rect width="${w}" height="87" fill="#fff"/>` +
  bar(0, 0, w, 7, '#4c6daf') + line(w / 2 - 3, 4.8, 6, '#dfe6f5') + line(w - 8, 1.5, 5, '#fff') + body + '</svg>';
}
function submit(y) { return bar(3, y, 35, 5, '#1a72d8') + line(19, y + 2.5, 4, '#fff'); }

// homework list with coloured badges
function home(colors, menu) {
 let s = '<circle cx="2.500" cy="9" r="1.300" fill="none" stroke="#888" stroke-width=".7"/>' + line(8, 9, 6, C.l) + line(31, 9, 2, C.k) + bar(35, 8, 2, 2, '#4c6daf');
 [...colors].forEach((c, i) => {
  const y = 16 + i * 9.1;
  s += `<circle cx="3.500" cy="${y}" r="2.800" fill="${C[c]}"/>` + line(7, y - 2.6, 7, C.k, 1.2) + line(29, y - 2.5, 8, '#ccc', .7) + line(7, y, 17, '#ccc') + line(7, y + 2, 15, '#ccc');
 });
 if (menu) s += para(26, 13.5, 9, 4);
 return frame(41, s);
}
// list of people, step is the row height
function people(colors, step, start, w, long, extra = '') {
 let s = line(6, 9, 8, C.l) + line(22, 9, 8, '#7f93c6') + line(35, 9, 2, '#7f93c6');
 [...colors].forEach((c, i) => {
  const y = start + i * step;
  s += `<circle cx="3" cy="${y}" r="1.900" fill="none" stroke="${C[c]}" stroke-width=".9"/><path d="M1.300 ${y + 1.8}h3.400" stroke="${C[c]}" stroke-width="1.300"/>`;
  s += line(7, y, long ? 18 + (i * 3) % 7 : 4, C.k, 1.2) + (long ? line(34, y, 2, '#e59a9a') : line(7, y + 1.8, 14, '#ccc', .7));
 });
 return frame(w, s + extra);
}
// homework description
function intro(end) {
 return frame(41, line(4, 9, 14, C.k) + line(4, 13.5, 22, C.k) + line(4, 19, 6, C.k) + para(4, 23, 32, 2) + line(4, 32, 13, C.k) + line(4, 36.5, 6, C.k) +
  para(4, 40, 34, 5) + line(4, 54, 20, C.k) + line(4, 59, 20, C.k) + line(4, 63.5, 20, C.k) + end);
}
// homework detail with attachment and optional comments
function detail(comments, end = '') {
 let s = line(3, 11, 22, '#222', 1.4) + line(3, 16.5, 18, C.l) + line(4, 21, 6, C.k) +
  '<rect x="3" y="25" width="35" height="6" fill="none" stroke="#e8e8e8" stroke-width=".7"/>' + bar(4.5, 26.5, 2, 3, C.k) + line(9, 28, 18, C.k) + line(34, 28, 3, '#7f93c6');
 [...comments].forEach((c, i) => {
  const y = 38 + i * 12.5;
  s += `<circle cx="3" cy="${y}" r="1.900" fill="none" stroke="${C[c]}"/>` + line(7, y - 1, 4, C.k) + para(7, y + 2, 27, 4);
 });
 return frame(42, s + end);
}
function assign() {
 return frame(43, line(2, 9.5, 16, C.l) + line(2, 14.5, 3, C.k) + line(28, 14.5, 9, C.l) + line(2, 19.5, 6, C.k) + line(2, 24, 9, C.l) + line(2, 33.5, 9, C.k) + line(19, 33.5, 4, C.k) +
  line(2, 38, 6, C.k) + line(2, 42.5, 12, C.l) + line(2, 52, 9, C.k) + line(24, 52, 13, C.l) + line(2, 57, 9, C.k) + line(31, 57, 6, C.l) + line(2, 61.5, 9, C.k) + line(31, 61.5, 6, C.l) + bar(2, 65, 35, 5, '#1a72d8'));
}
function profile() {
 return frame(43, bar(0, 8, 39, 21, '#f3f3f3') + line(2, 31.5, 16, C.l) + line(2, 36, 4, C.k) + line(7, 35.5, 20, '#8fb2e8', .7) + line(2, 41, 9, C.k) +
  bar(0, 46, 39, 25, '#f3f3f3') + bar(2, 48.5, 35, 5, '#1a72d8') + bar(2, 55, 35, 5, '#fff') + line(18, 57.5, 4, C.k));
}
function teacher() {
 return frame(43, line(2, 12, 4, C.l) + bar(29, 10, 7, 7, '#3c4f8c') + bar(33, 11, 3, 4, '#c0504d') + line(2, 23, 6, '#e59a9a') + bar(0, 27, 39, 1, '#f3f3f3') + line(2, 31.5, 12, C.l) +
  line(2, 36, 25, '#8fb2e8') + line(2, 41, 9, C.k) + bar(0, 46, 39, 25, '#f3f3f3') + bar(2, 48.5, 35, 5, '#1a72d8') + bar(2, 55, 35, 5, '#fff') + line(16, 57.5, 8, C.k));
}
function mine() {
 return frame(43, bar(0, 8, 39, 63, '#f3f3f3') + bar(1, 8, 37, 20, '#fff') + bar(17, 10, 7, 8, '#a5413c') + bar(19, 13, 3, 3, '#333') + line(17, 20.5, 7, C.k) +
  bar(0, 29, 39, 9, '#fff') + bar(1, 30, 2, 2, '#f5a11c') + line(5, 31, 11, C.k) + bar(1, 35, 2, 2, '#f5a11c') + line(5, 36, 11, C.k));
}

const box = '<rect x="3" y="19" width="35" height="11" fill="none" stroke="#ddd" stroke-width=".7"/>';
const box2 = '<rect x="3" y="32" width="35" height="14" fill="none" stroke="#ddd" stroke-width=".7"/>';
const rows = 'ogbosogbos';
const pages = [
 ['主页', home('rgagg')],
 ['个人信...', profile()],
 ['主页 老师', home('gg', true)],
 ['作业说明', intro(line(6, 69, 6, C.k) + line(25, 69, 7, '#e05a5a'))],
 ['主页 老...', home('ogg')],
 ['主页 老...', home('ggg')],
 ['布置作...', assign()],
 ['提交作...', people('ogbsb', 6.5, 16, 41)],
 ['提交作...', people('ogbsb', 6.5, 16, 41)],
 ['作业详情', detail('')],
 ['互评结...', people('ogbsbogbsb', 6, 15, 39)],
 ['作业详...', detail('gbo')],
 ['主页 学生', home('rgagg')],
 ['主页 学...', home('ggagg')],
 ['作业详...', intro(bar(3, 66, 33, 5, '#1a72d8'))],
 ['提交作业', frame(43, line(2, 11, 7, C.k) + line(10, 11, 11, C.l) + line(2, 18, 3, C.k) + line(32, 18, 3, C.k) + line(2, 22.5, 3, C.k) + line(28, 22.5, 8, C.l) + line(2, 29, 7, C.k) + box2 + bar(5, 35, 2, 2, C.k) + line(2, 48.5, 24, C.l) + line(2, 51.5, 20, '#8fa6d8') + line(2, 57.5, 3, C.k) + line(10, 57.5, 8, C.l) + submit(65.5))],
 ['提交作...', people('ooooo', 6.2, 16, 41, true)],
 ['待评价...', detail('', submit(65.5))],
 ['评价作业', frame(43, line(2, 11, 4, C.k) + line(11, 11, 11, C.l) + line(35, 11, 3, '#7f93c6') + line(2, 16, 3, C.k) + box + line(4, 21.5, 8, C.l) + submit(65.5))],
 ['提交作...', people('ooooo', 6.2, 16, 41, true)],
 ['互评结果', people(rows, 6.1, 15, 39, true)],
 ['互评结...', people(rows.slice(0, 9), 5.9, 14, 39, true, para(15, 65, 5, 4))],
 ['已评价...', detail('', line(3, 34.5, 6, C.k) + line(3, 39.5, 6, C.k) + para(3, 44, 34, 4) + submit(64.5))],
 ['作业详...', detail('gbo')],
 ['布置作业', teacher()],
 ['作业详情', intro('')],
 ['我', mine()]
];

document.getElementById('pageGrid').innerHTML = pages.map(([name, art], i) =>
 `<button class="page-card${i === 0 ? ' current' : ''}"><span class="thumb">${art}</span>${name}</button>`
).join('');
```
